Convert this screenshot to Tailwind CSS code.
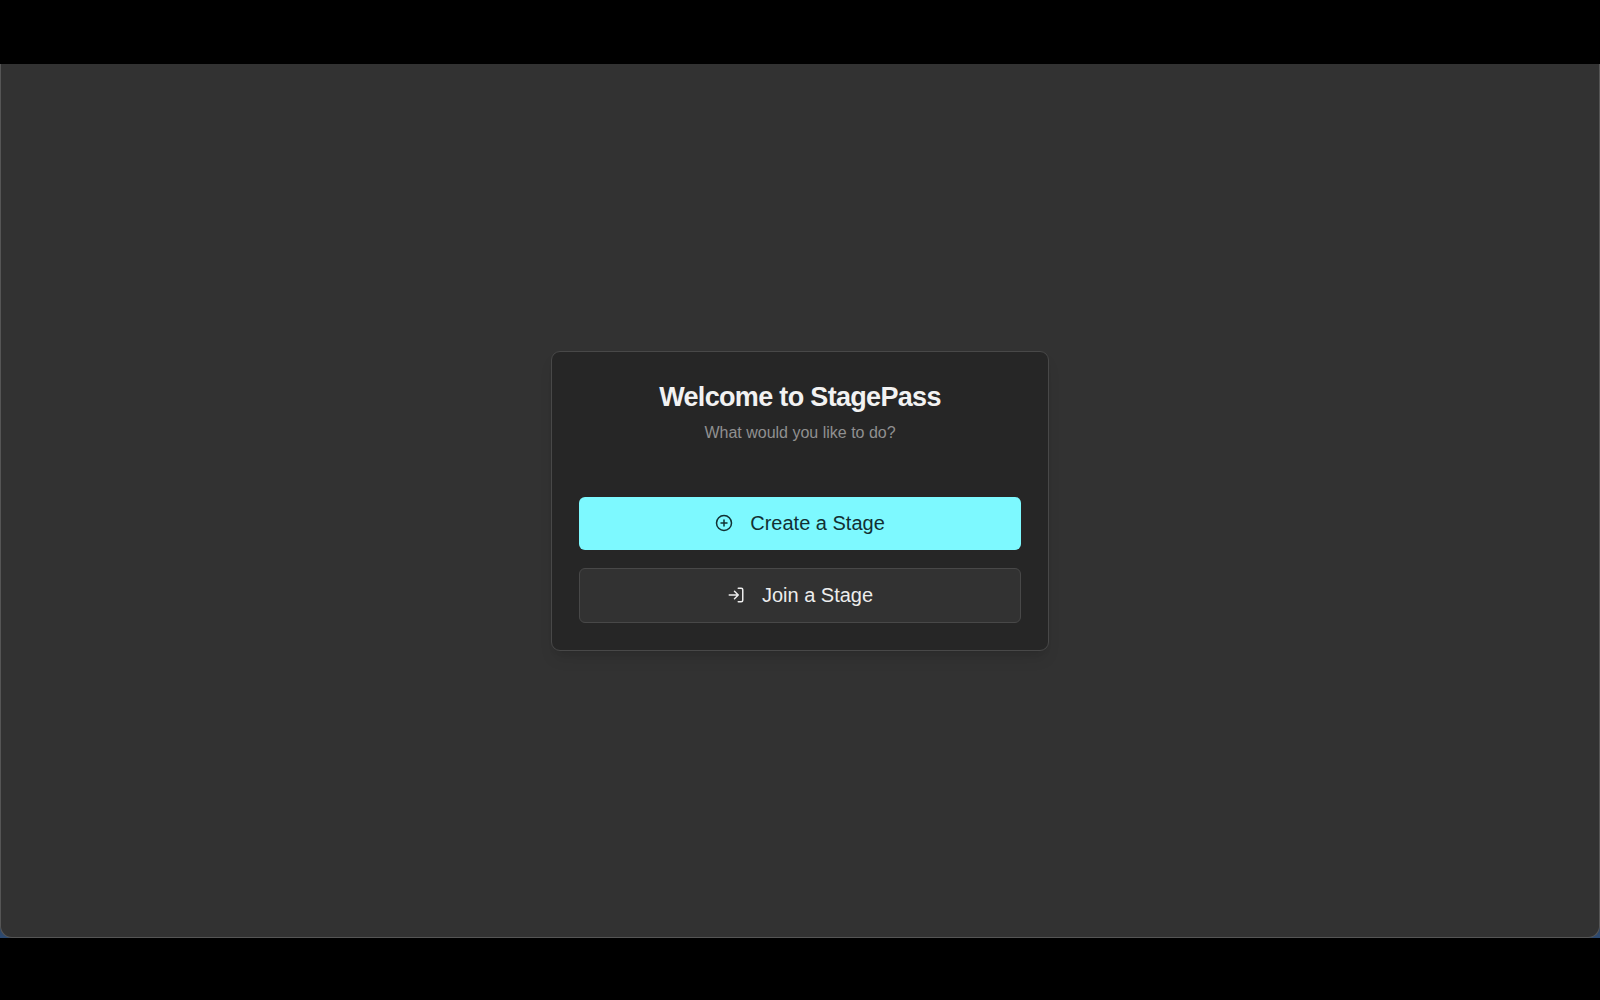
<!DOCTYPE html>
<html lang="en">
<head>
<meta charset="utf-8">
<meta name="viewport" content="width=device-width, initial-scale=1">
<title>StagePass</title>
<script src="https://cdn.jsdelivr.net/npm/@tailwindcss/browser@4"></script>
</head>
<body class="flex min-h-screen flex-col bg-black pt-16 pb-[62px] font-['Liberation_Sans',Arial,sans-serif]">
  <div class="flex grow bg-linear-to-t from-[#2c4a73] from-0% to-[#323232] to-5%">
    <main class="flex grow items-center justify-center rounded-b-xl border-x border-b border-[#555555] bg-[#323232] p-4">
      <section class="flex w-full max-w-[498px] flex-col rounded-[9px] border border-[#484848] bg-[#262626] p-[27px] shadow-lg">
        <header class="flex flex-col items-center text-center">
          <h1 class="text-[27px] leading-9 font-bold tracking-tight text-[#f2f2f2]">Welcome to StagePass</h1>
          <p class="mt-1 text-base leading-7 text-[#909090]">What would you like to do?</p>
        </header>
        <div class="mt-[50px] flex flex-col gap-[18px]">
          <button type="button" class="flex h-[53px] items-center justify-center gap-[17px] rounded-md bg-[#7df9ff] text-xl text-[#123033]">
            <svg class="size-[18px] shrink-0" viewBox="0 0 24 24" fill="none" stroke="currentColor" stroke-width="2" stroke-linecap="round" stroke-linejoin="round" aria-hidden="true"><circle cx="12" cy="12" r="10"/><path d="M8 12h8M12 8v8"/></svg>
            Create a Stage
          </button>
          <button type="button" class="flex h-[55px] items-center justify-center gap-[17px] rounded-md border border-[#484848] bg-[#323232] text-xl text-[#ededed]">
            <svg class="size-[18px] shrink-0" viewBox="0 0 24 24" fill="none" stroke="currentColor" stroke-width="2" stroke-linecap="round" stroke-linejoin="round" aria-hidden="true"><path d="M15 3h4a2 2 0 0 1 2 2v14a2 2 0 0 1-2 2h-4M10 17l5-5-5-5M15 12H3"/></svg>
            Join a Stage
          </button>
        </div>
      </section>
    </main>
  </div>
</body>
</html>
